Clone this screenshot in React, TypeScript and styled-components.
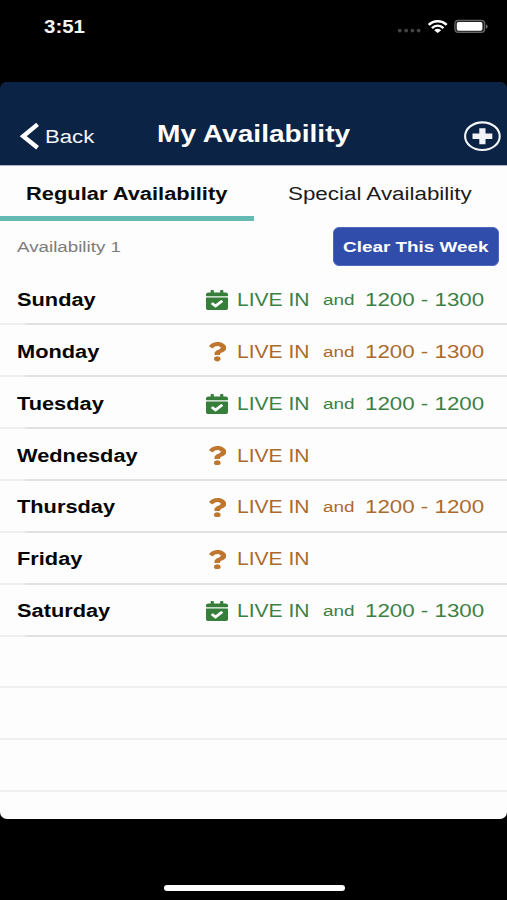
import React from "react";
import styled, { createGlobalStyle } from "styled-components";
import { FaCalendarCheck, FaQuestion } from "react-icons/fa";

const GlobalStyle = createGlobalStyle`
  * { box-sizing: border-box; }
  html, body { margin: 0; background: #000; }
  body { font-family: "Liberation Sans", Arial, sans-serif; }
`;

const Phone = styled.div`
  width: 507px;
  height: 900px;
  background: #000;
  display: flex;
  flex-direction: column;
  overflow: hidden;
`;

const StatusBar = styled.div`
  height: 82px;
  flex: none;
  display: flex;
  justify-content: space-between;
  align-items: flex-start;
  padding: 16px 18px 0 43.5px;
`;

const StatusIcons = styled.svg`
  display: block;
  width: 94px;
  height: 20px;
`;

/* Wide lettering: the text is drawn at its normal width and stretched sideways. */
const WideText = styled.span<{
  $size: number;
  $stretch: number;
  $bold?: boolean;
  $color?: string;
}>`
  display: inline-block;
  white-space: nowrap;
  font-size: ${(p) => p.$size}px;
  line-height: 22px;
  font-weight: ${(p) => (p.$bold ? 700 : 400)};
  color: ${(p) => p.$color ?? "#0b0b0b"};
  transform: scaleX(${(p) => p.$stretch});
  transform-origin: left center;
`;

const Screen = styled.main`
  height: 737px;
  flex: none;
  background: linear-gradient(#0b2344 0 40px, #fdfdfd 40px);
  border-radius: 7px;
  overflow: hidden;
  display: flex;
  flex-direction: column;
`;

const NavBar = styled.header`
  height: 84px;
  flex: none;
  background: #0b2344;
  border-bottom: 1px solid #a9b3ce;
  display: grid;
  grid-template-columns: 137px 306px 64px;
  align-items: start;
`;

const BackButton = styled.button`
  display: flex;
  align-items: center;
  gap: 5px;
  border: 0;
  padding: 0;
  margin: 40px 0 0 19px;
  background: none;
  font-family: inherit;
  text-align: left;
`;

const BackLabel = styled.span`
  padding-top: 2px;
`;

const Title = styled.h1`
  margin: 41px 0 0 19.5px;
  font-size: 0;
`;

const AddButton = styled.button`
  border: 0;
  padding: 0;
  margin: 38px 0 0 20px;
  background: none;
  width: 38px;
  height: 32px;
`;

const Tabs = styled.div`
  height: 54.7px;
  flex: none;
  display: grid;
  grid-template-columns: 254px 253px;
`;

const Tab = styled.div<{ $active?: boolean; $indent: number }>`
  padding: 17px 0 0 ${(p) => p.$indent}px;
  border-bottom: 5px solid ${(p) => (p.$active ? "#65bbb3" : "transparent")};
`;

const WeekHeader = styled.div`
  height: 52.8px;
  flex: none;
  display: flex;
  justify-content: space-between;
  align-items: flex-start;
  padding: 6.3px 8px 0 16.5px;
`;

const WeekName = styled.div`
  padding-top: 9px;
`;

const ClearButton = styled.button`
  width: 166px;
  height: 39px;
  border: 1px solid #5068bd;
  border-radius: 6px;
  background: #304dab;
  font-family: inherit;
  text-align: left;
  padding: 2px 0 0 9px;
`;

const DayRow = styled.div`
  height: 51.89px;
  flex: none;
  display: grid;
  grid-template-columns: 188.5px 31.5px 86.5px 42px 1fr;
  align-items: center;
  padding-left: 16.5px;
  padding-top: 3px;
  border-bottom: 2px solid;
  border-image: linear-gradient(to right, #f0f0f1 22px, #e2e2e4 30px) 1;
`;

const EmptyRow = styled(DayRow)`
  border-image: none;
  border-bottom-color: #efeff0;
`;

const IconCell = styled.span<{ $color: string; $width: number; $height: number }>`
  color: ${(p) => p.$color};
  height: 20px;
  width: 24px;
  display: flex;
  justify-content: center;
  align-items: center;

  svg {
    width: ${(p) => p.$width}px;
    height: ${(p) => p.$height}px;
    flex: none;
  }
`;

const HomeArea = styled.footer`
  flex: 1;
  display: flex;
  justify-content: center;
  align-items: flex-end;
  padding: 0 0 9px 1px;
`;

const HomeIndicator = styled.div`
  width: 181px;
  height: 6px;
  border-radius: 3px;
  background: #fff;
`;

type Status = "confirmed" | "pending";

const COLORS: Record<Status, string> = {
  confirmed: "#3c8044",
  pending: "#ab6a2b",
};

const ICON_COLORS: Record<Status, string> = {
  confirmed: "#357f3b",
  pending: "#bd772e",
};

const DAYS: { name: string; status: Status; hours?: string }[] = [
  { name: "Sunday", status: "confirmed", hours: "1200 - 1300" },
  { name: "Monday", status: "pending", hours: "1200 - 1300" },
  { name: "Tuesday", status: "confirmed", hours: "1200 - 1200" },
  { name: "Wednesday", status: "pending" },
  { name: "Thursday", status: "pending", hours: "1200 - 1200" },
  { name: "Friday", status: "pending" },
  { name: "Saturday", status: "confirmed", hours: "1200 - 1300" },
];

function StatusIcon({ status }: { status: Status }) {
  return status === "confirmed" ? (
    <IconCell $color={ICON_COLORS.confirmed} $width={22} $height={20}>
      <FaCalendarCheck preserveAspectRatio="none" />
    </IconCell>
  ) : (
    <IconCell $color={ICON_COLORS.pending} $width={18.6} $height={19.5}>
      <FaQuestion preserveAspectRatio="none" />
    </IconCell>
  );
}

function Day({ name, status, hours }: (typeof DAYS)[number]) {
  const color = COLORS[status];
  return (
    <DayRow>
      <WideText $size={18} $stretch={1.21} $bold $color="#050505">{name}</WideText>
      <StatusIcon status={status} />
      <WideText $size={18} $stretch={1.17} $color={color}>LIVE IN</WideText>
      {hours && <WideText $size={15.5} $stretch={1.22} $color={color}>and</WideText>}
      {hours && <WideText $size={18} $stretch={1.24} $color={color}>{hours}</WideText>}
    </DayRow>
  );
}

export default function App() {
  return (
    <>
      <GlobalStyle />
      <Phone>
        <StatusBar>
          <WideText $size={17.5} $stretch={1.17} $bold $color="#f4f4f4">3:51</WideText>
          <StatusIcons viewBox="395 16 94 20">
            <g fill="#444">
              <circle cx="399.7" cy="30.6" r="1.9" />
              <circle cx="406.2" cy="30.6" r="1.9" />
              <circle cx="412.4" cy="30.6" r="1.9" />
              <circle cx="418.6" cy="30.6" r="1.9" />
            </g>
            <g fill="none" stroke="#fff" strokeWidth="2.5">
              <path d="M428.7 24.9C433.7 19.9 441.7 19.9 446.7 24.9" />
              <path d="M431.9 28.2C435.4 25 440 25 443.5 28.2" />
            </g>
            <path d="M434.2 30.2C436.5 28.4 438.9 28.4 441.2 30.2L437.7 33Z" fill="#fff" />
            <rect x="454.9" y="20.4" width="29.8" height="12" rx="3.4" fill="#222" stroke="#666" strokeWidth="1.2" />
            <rect x="456.8" y="22" width="25.6" height="8.8" rx="1.8" fill="#fff" />
            <path d="M486 24.4C488.1 25 488.1 28 486 28.6Z" fill="#777" />
          </StatusIcons>
        </StatusBar>
        <Screen>
          <NavBar>
            <BackButton>
              <svg width="21" height="28" viewBox="0 0 21 28" fill="none" stroke="#fff" strokeWidth="4.4">
                <path d="M18.6 2.4L4.2 14.2L18.6 25.8" />
              </svg>
              <BackLabel>
                <WideText $size={18} $stretch={1.23} $color="#f3f6fb">Back</WideText>
              </BackLabel>
            </BackButton>
            <Title>
              <WideText $size={23} $stretch={1.222} $bold $color="#fff">My Availability</WideText>
            </Title>
            <AddButton aria-label="Add availability">
              <svg width="38" height="32" viewBox="0 0 38 32">
                <ellipse cx="19.4" cy="16.2" rx="17.3" ry="13.8" fill="none" stroke="#f4f6fa" strokeWidth="2.1" />
                <path d="M16.3 8.2h6.2v5.3h6.8v5.4h-6.8v5.3h-6.2v-5.3H9.5v-5.4h6.8z" fill="#f1f3f7" />
              </svg>
            </AddButton>
          </NavBar>
          <Tabs>
            <Tab $active $indent={26}>
              <WideText $size={18} $stretch={1.215} $bold>Regular Availability</WideText>
            </Tab>
            <Tab $indent={34}>
              <WideText $size={18} $stretch={1.243} $color="#1a1a1a">Special Availability</WideText>
            </Tab>
          </Tabs>
          <WeekHeader>
            <WeekName>
              <WideText $size={15.5} $stretch={1.21} $color="#7c7c7c">Availability 1</WideText>
            </WeekName>
            <ClearButton>
              <WideText $size={15.5} $stretch={1.218} $bold $color="#fff">Clear This Week</WideText>
            </ClearButton>
          </WeekHeader>
          {DAYS.map((d) => (
            <Day key={d.name} {...d} />
          ))}
          <EmptyRow />
          <EmptyRow />
          <EmptyRow />
        </Screen>
        <HomeArea>
          <HomeIndicator />
        </HomeArea>
      </Phone>
    </>
  );
}
